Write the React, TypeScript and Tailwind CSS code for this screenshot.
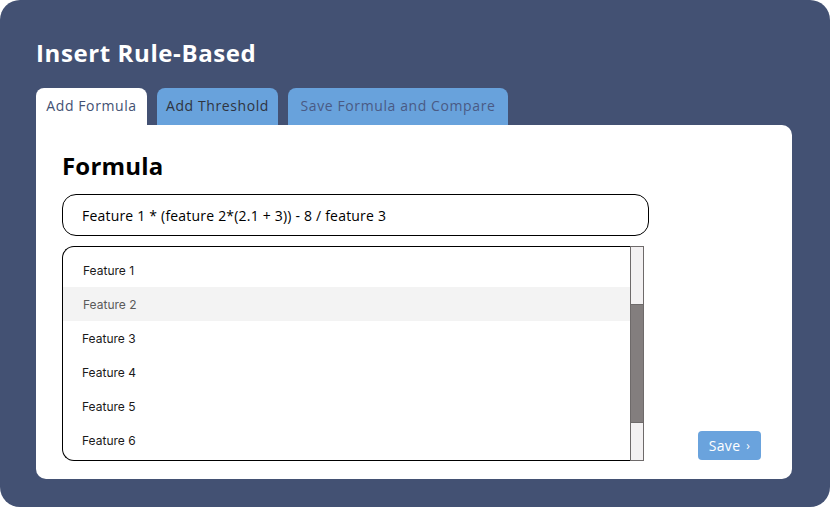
import React from 'react';

const features = ['Feature 1', 'Feature 2', 'Feature 3', 'Feature 4', 'Feature 5', 'Feature 6'];

const tabs = [
  { label: 'Add Formula', active: true, color: 'text-[#435173]', w: 'w-[111px]' },
  { label: 'Add Threshold', active: false, color: 'text-[#2f3440]', w: 'w-[121px]' },
  { label: 'Save Formula and Compare', active: false, color: 'text-[#4a5a84]', w: 'w-[220px]' },
];

const App = () => {
  const poppins = { fontFamily: "'Open Sans', 'Noto Sans', sans-serif" };

  return (
    <div className="w-[830px] h-[518px] bg-white">
      <div className="w-[830px] h-[507px] bg-[#435173] rounded-[20px] px-[36px] pt-[37px]">
        {/* Header */}
        <h1 className="text-white text-[24px] font-bold leading-[32px] tracking-[0.6px]" style={poppins}>
          Insert Rule-Based
        </h1>

        {/* Tabs */}
        <div className="flex gap-[10px] mt-[19px]">
          {tabs.map((t) => (
            <div
              key={t.label}
              className={`${t.w} h-[37px] flex justify-center pt-[8px] rounded-t-[8px] text-[14px] leading-[20px] tracking-[0.6px] ${t.color} ${
                t.active ? 'bg-white' : 'bg-[#68a2dc]'
              }`}
              style={poppins}
            >
              {t.label}
            </div>
          ))}
        </div>

        {/* Card */}
        <div className="w-[756px] h-[354px] bg-white rounded-b-[10px] rounded-tr-[10px] px-[26px] pt-[27px]">
          <h2 className="text-black text-[24px] font-bold leading-[28px] tracking-[0.2px]" style={poppins}>
            Formula
          </h2>

          <div
            className="mt-[14px] w-[587px] h-[42px] border border-black rounded-[14px] flex items-center px-[19px] text-[14px] font-medium text-black tracking-[0.2px]"
            style={poppins}
          >
            Feature 1 * (feature 2*(2.1 + 3)) - 8 / feature 3
          </div>

          <div className="flex items-end justify-between mt-[10px] w-[699px]">
            {/* Feature list */}
            <div className="flex w-[582px] h-[215px]">
              <div className="flex-1 border-l border-y border-black rounded-l-[12px] pt-[6px]">
                {features.map((f, i) => (
                  <div
                    key={f}
                    className={`h-[34px] flex items-center pt-[1px] text-[12px] ${
                      i === 1 ? 'bg-[#f3f3f3] text-[#5a5a5a]' : 'text-[#1a1a1a]'
                    } ${i < 2 ? 'pl-[20px]' : 'pl-[19px]'}`}
                    style={{ fontFamily: 'Inter, sans-serif' }}
                  >
                    {f}
                  </div>
                ))}
              </div>
              <div className="w-[14px] border border-[#6e6a6a] bg-[#f3f1f2] flex flex-col">
                <div className="h-[57px]" />
                <div className="h-[119px] bg-[#837e7e] border-y border-[#6e6a6a]" />
              </div>
            </div>

            {/* Save button */}
            <button
              className="w-[63px] h-[29px] bg-[#6aa3dd] rounded-[4px] text-white text-[14px] flex items-center justify-center gap-[6px] mb-[1px] tracking-[0.3px]"
              style={poppins}
            >
              Save <span className="text-[12px]">›</span>
            </button>
          </div>
        </div>
      </div>
    </div>
  );
};

export default App;
